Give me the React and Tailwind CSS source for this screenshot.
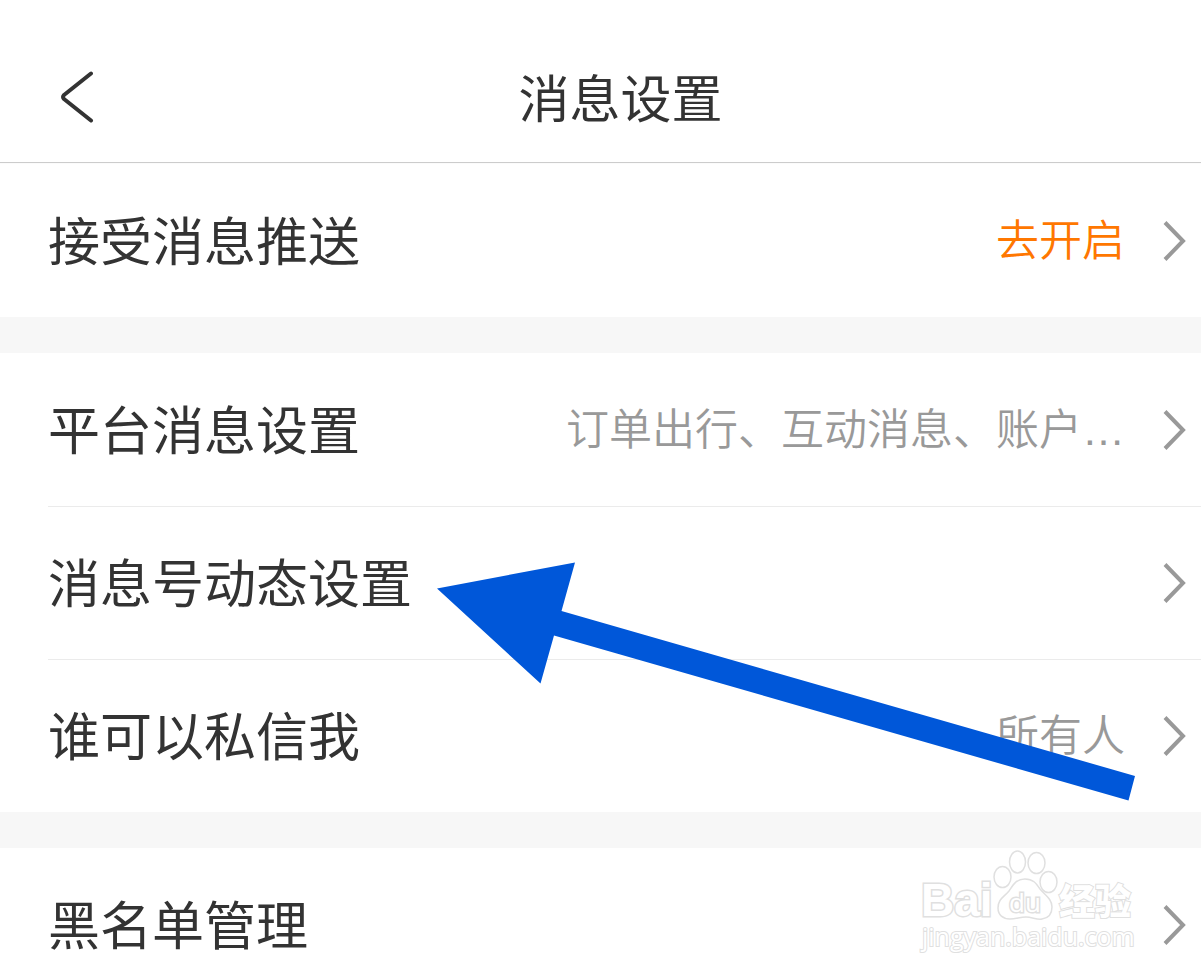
const GROUPS = [
  [{ label: "接受消息推送", value: "去开启", highlight: true }],
  [
    { label: "平台消息设置", value: "订单出行、互动消息、账户…" },
    { label: "消息号动态设置" },
    { label: "谁可以私信我", value: "所有人" },
  ],
  [{ label: "黑名单管理" }],
];

function ChevronRight() {
  return (
    <svg
      viewBox="0 0 24 40"
      className="w-6 h-10 shrink-0"
      fill="none"
      stroke="#999999"
      strokeWidth="4"
      aria-hidden="true"
    >
      <path d="M2 1.500 L20 20 L2 38.500" />
    </svg>
  );
}

function SettingRow({ label, value, highlight, isFirst }) {
  return (
    <button type="button" className="block w-full pl-12 text-left">
      <span
        className={`flex items-center border-t py-[38px] pr-[14px] ${
          isFirst ? "border-transparent" : "border-[#ebebeb]"
        }`}
      >
        <span className="pb-1 text-[52px] leading-[72px] whitespace-nowrap text-[#333333]">
          {label}
        </span>
        <span
          className={`ml-auto mr-[38px] font-['Liberation_Sans','Noto_Sans_CJK_SC',sans-serif] text-[43px] leading-[72px] font-[350] whitespace-nowrap ${
            highlight ? "text-[#ff7700]" : "text-[#999999]"
          }`}
        >
          {value}
        </span>
        <ChevronRight />
      </span>
    </button>
  );
}

function PointerArrow() {
  return (
    <svg
      viewBox="0 0 700 240"
      className="pointer-events-none absolute right-[66px] top-[209px] w-[700px] h-[240px]"
      aria-hidden="true"
    >
      <path
        d="M2 26.500 L140 0.500 L126.500 49 L700 214 L693.500 238.500 L119 73.500 L105.500 121.500 Z"
        fill="#0057d9"
      />
    </svg>
  );
}

function Watermark() {
  return (
    <svg
      viewBox="0 0 220 110"
      className="pointer-events-none absolute right-[63px] top-[1px] w-[220px] h-[110px]"
      fill="#ffffff"
      stroke="#e0e0e0"
      strokeWidth="1.5"
      aria-hidden="true"
    >
      <text
        x="3"
        y="67"
        fontSize="46"
        fontWeight="700"
        fontFamily="Liberation Sans, sans-serif"
        strokeWidth="3"
        paintOrder="stroke"
      >
        Bai
      </text>
      <ellipse cx="84.500" cy="28" rx="8.500" ry="10.500" />
      <ellipse cx="99.500" cy="13" rx="8" ry="11" />
      <ellipse cx="118.500" cy="14" rx="8.500" ry="10.500" />
      <ellipse cx="130.500" cy="33" rx="8.500" ry="10.500" />
      <path d="M107 30 C98 30 95 36 91 42 C86 48 80 50 80 59 C80 66 85 70 92 70 C98 70 102 68 108 68 C114 68 119 71 124 70 C131 69 134 65 134 58 C134 50 127 46 122 40 C118 34 115 30 107 30 Z" />
      <text
        x="91"
        y="63"
        fontSize="26"
        fontFamily="Open Sans, sans-serif"
        strokeWidth="3"
        paintOrder="stroke"
      >
        du
      </text>
      <text
        x="141"
        y="66"
        fontSize="36"
        fontWeight="900"
        fontFamily="Noto Sans CJK SC, sans-serif"
        strokeWidth="2"
        paintOrder="stroke"
      >
        经验
      </text>
      <text
        x="4"
        y="97"
        fontSize="25"
        fontFamily="Open Sans, sans-serif"
        strokeWidth="2"
        paintOrder="stroke"
      >
        jingyan.baidu.com
      </text>
    </svg>
  );
}

export default function App() {
  return (
    <div className="h-screen overflow-hidden bg-[#f7f7f7] font-['Noto_Sans_CJK_SC','Liberation_Sans',sans-serif]">
      <header className="flex items-center border-b border-[#cccccc] bg-white pt-15 pr-[54px] pb-[30px] pl-[58px]">
        <button type="button" aria-label="返回">
          <svg
            viewBox="0 0 36 54"
            className="w-9 h-[54px]"
            fill="none"
            stroke="#333333"
            strokeWidth="4"
            strokeLinecap="round"
            strokeLinejoin="round"
            aria-hidden="true"
          >
            <path d="M33 4.500 L6 26 Q4 28 6 30 L33 51.500" />
          </svg>
        </button>
        <h1 className="flex-1 text-center text-[51px] leading-[72px] text-[#333333]">
          消息设置
        </h1>
      </header>

      <main className="flex flex-col gap-9 border-t border-[#fbfbfb]">
        {GROUPS.map((rows, groupIndex) => (
          <section key={groupIndex} className="relative bg-white">
            {rows.map((row, i) => (
              <SettingRow key={row.label} {...row} isFirst={i === 0} />
            ))}
            {groupIndex === 1 && <PointerArrow />}
            {groupIndex === 2 && <Watermark />}
          </section>
        ))}
      </main>
    </div>
  );
}
